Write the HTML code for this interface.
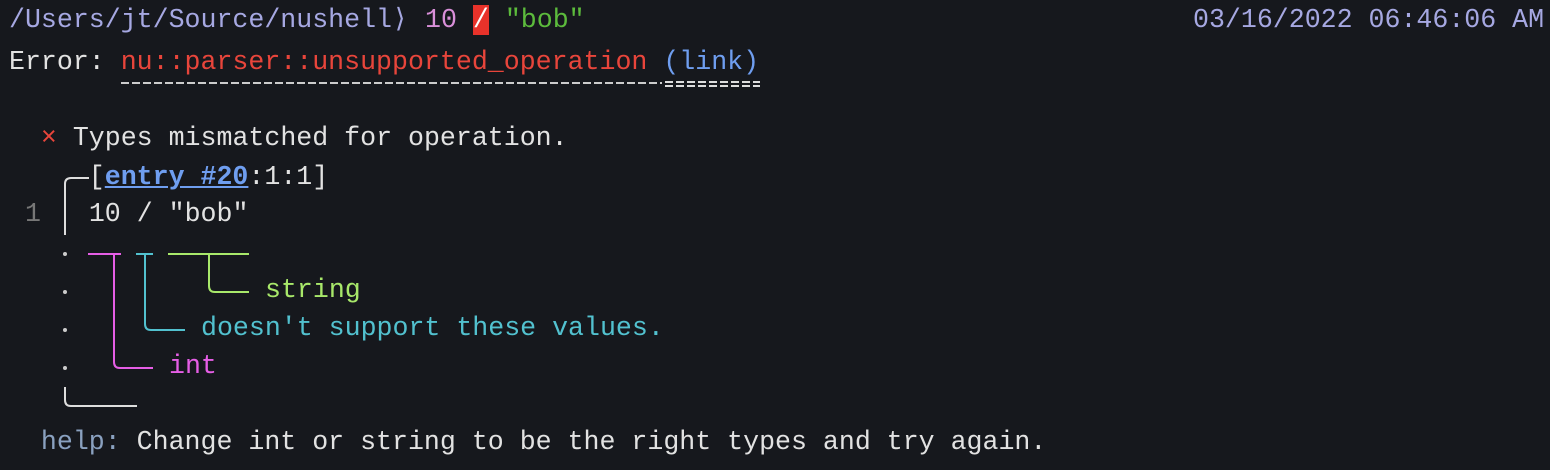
<!DOCTYPE html>
<html><head><meta charset="utf-8"><style>
html,body{margin:0;padding:0;background:#16181d;width:1550px;height:470px;overflow:hidden}
.l{position:absolute;left:9px;font-family:"Liberation Mono","DejaVu Sans Mono",monospace;font-size:26.6px;line-height:38px;white-space:pre;color:#e2e2e2}
.lav{color:#a6a8e2}.pk{color:#d98fd9}.gr{color:#5cbb3c}.rd{color:#e8453b}.bl{color:#6f9ef0}
.sl{background:#e8322a;color:#fff}
.str{color:#a8e86a}.cy{color:#52c1cf}.mg{color:#e65ee6}.hp{color:#8aa1c0}.dim{color:#777}
</style></head><body>
<div class="l lav" style="top:1px">/Users/jt/Source/nushell⟩</div>
<div class="l" style="top:1px;left:425px"><span class="pk">10</span> <span class="sl">/</span> <span class="gr">"bob"</span></div>
<div class="l lav" style="top:1px;left:1193px">03/16/2022 06:46:06 AM</div>
<div class="l" style="top:43px">Error: <span class="rd">nu::parser::unsupported_operation</span> <span class="bl">(link)</span></div>
<div class="l" style="top:119px">  <span class="rd">×</span> Types mismatched for operation.</div>
<div class="l" style="top:158px">     [<span class="bl" style="text-decoration:underline;font-weight:bold">entry #20</span>:1:1]</div>
<div class="l" style="top:195px"> <span class="dim">1</span>   10 / "bob"</div>
<div class="l str" style="top:271px;left:265px">string</div>
<div class="l cy" style="top:309px;left:201px">doesn't support these values.</div>
<div class="l mg" style="top:347px;left:169px">int</div>
<div class="l" style="top:423px">  <span class="hp">help:</span> Change int or string to be the right types and try again.</div>
<svg width="1550" height="470" style="position:absolute;left:0;top:0" fill="none" stroke-width="2">
<line x1="121" y1="83" x2="662" y2="83" stroke="#ccc" stroke-dasharray="8 3"/>
<line x1="665" y1="82" x2="760" y2="82" stroke="#ddd" stroke-dasharray="8 3"/>
<line x1="665" y1="86" x2="760" y2="86" stroke="#ddd" stroke-dasharray="8 3"/>
<path d="M65 235 V184 Q65 178 71 178 H89" stroke="#ddd"/>
<path d="M65 387 V400 Q65 406 71 406 H137" stroke="#ddd"/>
<g fill="#ccc" stroke="none"><circle cx="65" cy="254" r="2"/><circle cx="65" cy="292" r="2"/><circle cx="65" cy="330" r="2"/><circle cx="65" cy="368" r="2"/></g>
<path d="M88 254 H121 M114 254 V362 Q114 368 120 368 H153" stroke="#e65ee6"/>
<path d="M136 254 H153 M145 254 V324 Q145 330 151 330 H185" stroke="#52c1cf"/>
<path d="M168 254 H249 M209 254 V286 Q209 292 215 292 H249" stroke="#a8e86a"/>
</svg>
</body></html>
